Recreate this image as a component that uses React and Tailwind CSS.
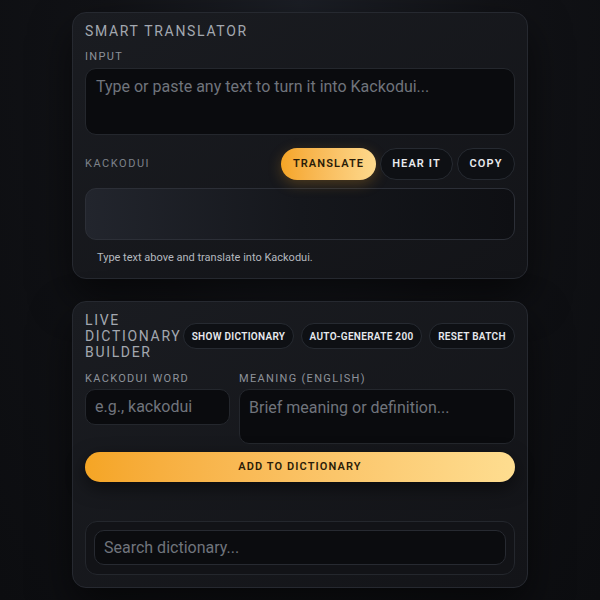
import React from 'react'

const font = { fontFamily: 'Roboto, "Noto Sans", sans-serif' }

const Pill = ({ children, className = '' }) => (
    <button
        className={`rounded-full border border-[#262a31] bg-[#0e1014] font-semibold text-[#e8eaee] ${className}`}
    >
        {children}
    </button>
)

export default function App() {
    return (
        <div
            style={font}
            className="min-h-[600px] w-full bg-[radial-gradient(ellipse_at_50%_0%,#1b1e25_0%,#111216_45%,#0c0d10_100%)] pt-3 pb-3"
        >
            <div className="mx-auto flex w-[456px] flex-col gap-[22px]">
                {/* translator */}
                <section className="rounded-[14px] border border-[#262930] bg-gradient-to-br from-[#1a1c21] to-[#131418] px-3 pt-2 pb-3 shadow-[0_18px_40px_rgba(0,0,0,0.55)]">
                    <h1 className="text-[14px] leading-5 tracking-[0.12em] text-[#a3a8b0]">
                        SMART TRANSLATOR
                    </h1>
                    <div className="mt-2 mb-[3px] text-[11px] leading-4 tracking-[0.12em] text-[#8d929a]">
                        INPUT
                    </div>
                    <div className="h-[67px] rounded-[11px] border border-[#24272d] bg-[#0a0b0e] px-[10px] py-2 text-base leading-5 text-[#70747c]">
                        Type or paste any text to turn it into Kackodui...
                    </div>

                    <div className="mt-[13px] flex items-center justify-between">
                        <span className="text-[11px] tracking-[0.14em] text-[#7d828a]">
                            KACKODUI
                        </span>
                        <div className="flex gap-[4px]">
                            <button className="h-8 w-[95px] rounded-full bg-gradient-to-r from-[#f5a524] to-[#fdd98c] text-[11px] font-semibold tracking-[0.1em] text-[#2a1c08] shadow-[0_4px_14px_rgba(245,165,36,0.25)]">
                                TRANSLATE
                            </button>
                            <Pill className="h-8 w-[73px] text-[11px] tracking-[0.1em]">
                                HEAR IT
                            </Pill>
                            <Pill className="h-8 w-[58px] text-[11px] tracking-[0.1em]">
                                COPY
                            </Pill>
                        </div>
                    </div>

                    <div className="mt-2 h-[52px] rounded-[11px] border border-[#2c2f37] bg-gradient-to-r from-[#22252d] via-[#15171c] to-[#0e0f13]" />

                    <p className="mt-[10px] pl-3 text-[11px] leading-4 text-[#b4b8bf]">
                        Type text above and translate into Kackodui.
                    </p>
                </section>

                {/* dictionary builder */}
                <section className="rounded-[14px] border border-[#262930] bg-gradient-to-br from-[#1a1c21] to-[#131418] px-3 pt-[10px] pb-3 shadow-[0_18px_40px_rgba(0,0,0,0.55)]">
                    <div className="flex items-center justify-between">
                        <h2 className="min-w-0 text-[14px] leading-4 tracking-[0.12em] text-[#a3a8b0]">
                            LIVE DICTIONARY BUILDER
                        </h2>
                        <div className="flex shrink-0 gap-[7px]">
                            <Pill className="h-[26px] w-[111px] text-[10px] tracking-[0.03em]">
                                SHOW DICTIONARY
                            </Pill>
                            <Pill className="h-[26px] w-[121px] text-[10px] tracking-[0.03em]">
                                AUTO-GENERATE 200
                            </Pill>
                            <Pill className="h-[26px] w-[86px] text-[10px] tracking-[0.03em]">
                                RESET BATCH
                            </Pill>
                        </div>
                    </div>

                    <div className="mt-[11px] grid grid-cols-[145px_1fr] items-start gap-x-[9px]">
                        <div>
                            <div className="mb-[2px] text-[11px] leading-4 tracking-[0.12em] text-[#8d929a]">
                                KACKODUI WORD
                            </div>
                            <div className="flex h-9 items-center rounded-[10px] border border-[#24272d] bg-[#0a0b0e] px-[9px] text-base text-[#70747c]">
                                e.g., kackodui
                            </div>
                        </div>
                        <div>
                            <div className="mb-[2px] text-[11px] leading-4 tracking-[0.12em] text-[#8d929a]">
                                MEANING (ENGLISH)
                            </div>
                            <div className="h-[55px] rounded-[10px] border border-[#24272d] bg-[#0a0b0e] px-[9px] pt-2 text-base leading-5 text-[#70747c]">
                                Brief meaning or definition...
                            </div>
                        </div>
                    </div>

                    <button className="mt-2 h-[30px] w-full rounded-full bg-gradient-to-r from-[#f5a524] to-[#fedd90] text-[11px] font-semibold tracking-[0.1em] text-[#2a1c08] shadow-[0_6px_18px_rgba(0,0,0,0.5)]">
                        ADD TO DICTIONARY
                    </button>

                    <div className="mt-[39px] rounded-[12px] border border-[#24272d] bg-[#121317] px-2 pt-2 pb-[9px]">
                        <div className="flex h-[35px] items-center rounded-[10px] border border-[#272a31] bg-[#0b0c0f] px-[9px] text-base text-[#70747c]">
                            Search dictionary...
                        </div>
                    </div>
                </section>
            </div>
        </div>
    )
}
